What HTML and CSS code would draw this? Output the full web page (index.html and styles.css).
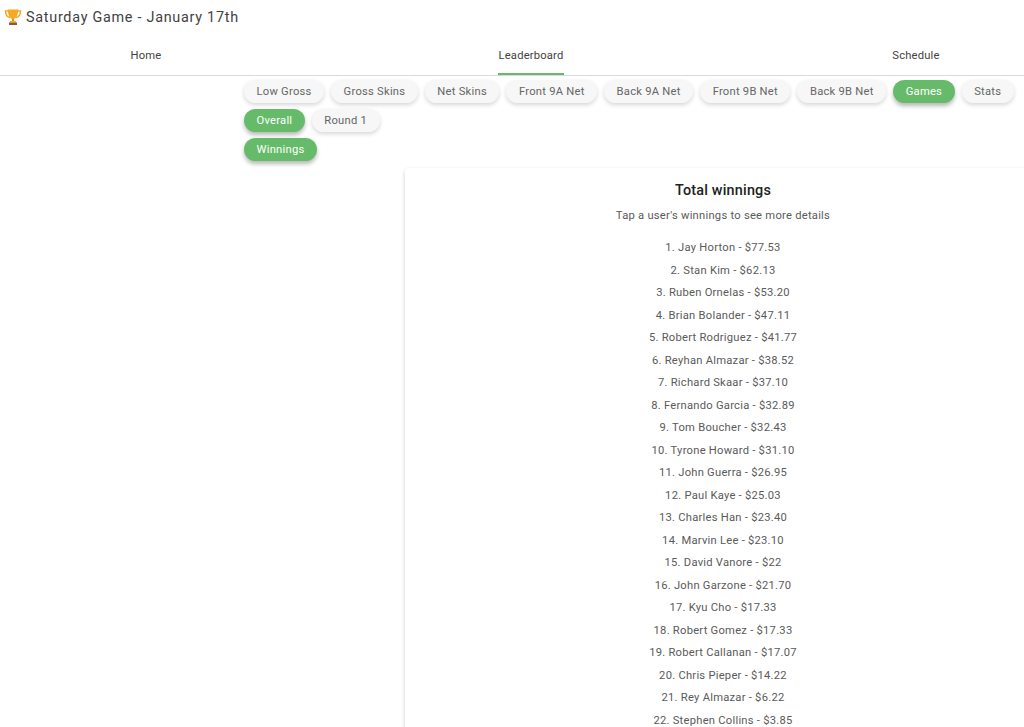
FILE: index.html
```
<!DOCTYPE html>
<html lang="en">
<head>
<meta charset="utf-8">
<title>Saturday Game - January 17th</title>
<link rel="stylesheet" href="styles.css">
</head>
<body>
<header class="title-bar">
  <svg class="trophy" viewBox="0 0 18 18" width="18" height="18" aria-hidden="true">
    <path d="M4 3H1.500C1.500 7 3 9 6 9.500" fill="none" stroke="#f5a623" stroke-width="1.400"/>
    <path d="M14 3h2.500C16.500 7 15 9 12 9.500" fill="none" stroke="#f5a623" stroke-width="1.400"/>
    <path d="M3.800 1.500h10.400C14 7 12.500 10 10 11H8C5.500 10 4 7 3.800 1.500Z" fill="#f9a825"/>
    <rect x="8" y="11" width="2" height="2.500" fill="#e08e0b"/>
    <rect x="6" y="13" width="6" height="1.500" fill="#f9a825"/>
    <rect x="5" y="14.500" width="8" height="2.500" fill="#8d5a2b"/>
  </svg>
  <h1 class="title">Saturday Game - January 17th</h1>
</header>
<nav class="tabs">
  <a class="tab"><span class="tab-label">Home</span></a>
  <a class="tab tab-active"><span class="tab-label">Leaderboard</span></a>
  <a class="tab"><span class="tab-label">Schedule</span></a>
</nav>
<main class="content">
  <div class="chip-row">
    <span class="chip">Low Gross</span>
    <span class="chip">Gross Skins</span>
    <span class="chip">Net Skins</span>
    <span class="chip">Front 9A Net</span>
    <span class="chip">Back 9A Net</span>
    <span class="chip">Front 9B Net</span>
    <span class="chip">Back 9B Net</span>
    <span class="chip chip-on">Games</span>
    <span class="chip">Stats</span>
  </div>
  <div class="chip-row">
    <span class="chip chip-on">Overall</span>
    <span class="chip">Round 1</span>
  </div>
  <div class="chip-row">
    <span class="chip chip-on">Winnings</span>
  </div>
  <section class="card">
    <h2 class="card-title">Total winnings</h2>
    <p class="card-sub">Tap a user's winnings to see more details</p>
    <ol class="list">
      <li>1. Jay Horton - $77.53</li>
      <li>2. Stan Kim - $62.13</li>
      <li>3. Ruben Ornelas - $53.20</li>
      <li>4. Brian Bolander - $47.11</li>
      <li>5. Robert Rodriguez - $41.77</li>
      <li>6. Reyhan Almazar - $38.52</li>
      <li>7. Richard Skaar - $37.10</li>
      <li>8. Fernando Garcia - $32.89</li>
      <li>9. Tom Boucher - $32.43</li>
      <li>10. Tyrone Howard - $31.10</li>
      <li>11. John Guerra - $26.95</li>
      <li>12. Paul Kaye - $25.03</li>
      <li>13. Charles Han - $23.40</li>
      <li>14. Marvin Lee - $23.10</li>
      <li>15. David Vanore - $22</li>
      <li>16. John Garzone - $21.70</li>
      <li>17. Kyu Cho - $17.33</li>
      <li>18. Robert Gomez - $17.33</li>
      <li>19. Robert Callanan - $17.07</li>
      <li>20. Chris Pieper - $14.22</li>
      <li>21. Rey Almazar - $6.22</li>
      <li>22. Stephen Collins - $3.85</li>
    </ol>
  </section>
</main>
</body>
</html>
```
FILE: styles.css
```
html, body {
  margin: 0;
  padding: 0;
  height: 727px;
  overflow: hidden;
  background: #fff;
  font-family: Roboto, "Liberation Sans", sans-serif;
}
.title-bar {
  display: flex;
  align-items: center;
  gap: 4px;
  height: 34px;
  padding-left: 4px;
}
.trophy { flex: none; }
.title {
  margin: 0;
  font-size: 14.4px;
  font-weight: 400;
  letter-spacing: 0.72px;
  color: #424242;
}
.tabs {
  display: grid;
  grid-template-columns: repeat(3, 385px);
  margin-left: -46.5px;
  height: 41px;
  border-bottom: 1px solid #d9d9de;
  width: 1071px;
  overflow: hidden;
}
.tab {
  display: flex;
  justify-content: center;
  font-size: 11.2px;
  color: #424242;
  letter-spacing: 0.2px;
}
.tab-label {
  display: flex;
  align-items: center;
  height: 41px;
  padding-top: 4px;
  box-sizing: border-box;
  border-bottom: 2px solid transparent;
}
.tab-active .tab-label { border-bottom-color: #66bb6a; }
.content {
  padding: 4px 0 0 244px;
}
.chip-row {
  display: flex;
  gap: 7px;
  height: 23px;
  margin-bottom: 6px;
  white-space: nowrap;
}
.chip {
  display: flex;
  align-items: center;
  height: 23px;
  padding: 0 12.5px;
  border-radius: 12px;
  background: #f7f7f7;
  color: #666;
  font-size: 11.2px;
  letter-spacing: 0.25px;
  box-shadow: 0 2px 4px rgba(0,0,0,0.16);
}
.chip-on {
  background: #66bb6a;
  color: #fff;
  box-shadow: 0 3px 4px rgba(0,0,0,0.28);
}
.card {
  width: 636px;
  margin: 7px 0 0 161px;
  padding-top: 13px;
  height: 600px;
  box-sizing: border-box;
  border-radius: 4px;
  background: #fff;
  box-shadow: 0 2px 4px rgba(0,0,0,0.2);
  text-align: center;
}
.card-title {
  margin: 0;
  font-size: 14.4px;
  line-height: 20px;
  font-weight: 500;
  color: #212121;
  letter-spacing: 0.2px;
}
.card-sub {
  margin: 5px 0 12px;
  font-size: 11.2px;
  line-height: 19px;
  color: #5a5a5a;
  letter-spacing: 0.25px;
}
.list {
  margin: 0;
  padding: 0;
  list-style: none;
  font-size: 11.2px;
  line-height: 22.5px;
  color: #5a5a5a;
  letter-spacing: 0.25px;
}
```
